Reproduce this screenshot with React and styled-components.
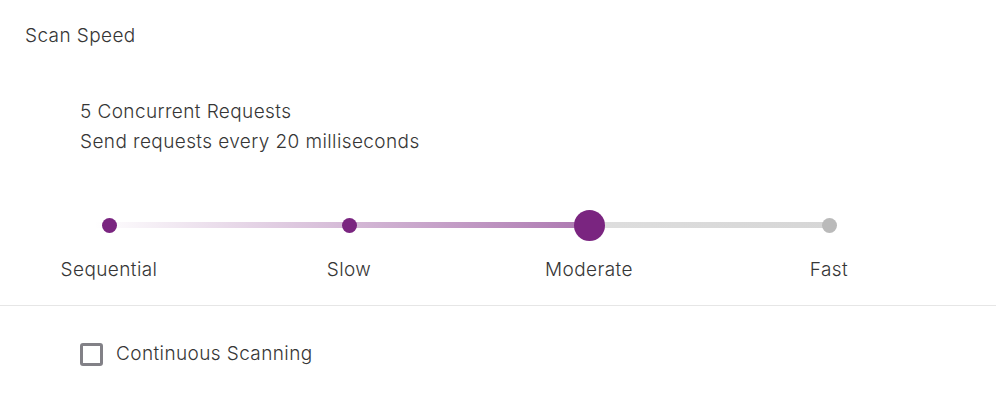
import React, { useState } from 'react';
import styled, { createGlobalStyle } from 'styled-components';

const GlobalStyle = createGlobalStyle`
  body {
    margin: 0;
    background: #ffffff;
    font-family: Inter, "Noto Sans", sans-serif;
    font-weight: 300;
    letter-spacing: 0.4px;
    color: #363636;
  }
`;

const PURPLE = '#7a2580';

const Panel = styled.div`
  width: 996px;
`;

const SpeedSection = styled.section`
  padding: 21px 0 23px;
  border-bottom: 1px solid #e6e6e6;
`;

const Title = styled.h2`
  margin: 0 0 0 25px;
  font-size: 19px;
  font-weight: 300;
  line-height: 30px;
`;

const Description = styled.div`
  margin: 46px 0 0 80px;
  font-size: 19px;
  line-height: 30px;
`;

const Slider = styled.div`
  width: 840px;
  margin: 53px 0 0 49px;
`;

const Rail = styled.div`
  position: relative;
  height: 30px;
  display: flex;
  justify-content: space-between;
  align-items: center;
`;

const Track = styled.div`
  position: absolute;
  left: 45px;
  right: 60px;
  top: 12px;
  height: 6px;
  background: linear-gradient(
    to right,
    rgba(122, 37, 128, 0) 0px,
    rgba(122, 37, 128, 0.62) ${p => p.$fill}px,
    #dedede ${p => p.$fill}px,
    #d6d6d6 100%
  );
`;

const Stop = styled.button`
  position: relative;
  width: 120px;
  height: 30px;
  padding: 0;
  border: 0;
  background: transparent;
  display: flex;
  align-items: center;
  justify-content: center;
  cursor: pointer;
`;

const Dot = styled.span`
  display: block;
  width: ${p => (p.$active ? 31 : 15)}px;
  height: ${p => (p.$active ? 31 : 15)}px;
  border-radius: 50%;
  background: ${p => (p.$reached ? PURPLE : '#bababa')};
`;

const Labels = styled.div`
  display: flex;
  justify-content: space-between;
  margin-top: 18px;
`;

const Label = styled.span`
  width: 120px;
  text-align: center;
  font-size: 19px;
  line-height: 24px;
`;

const OptionRow = styled.label`
  display: flex;
  align-items: center;
  gap: 13px;
  margin: 36px 0 0 80px;
  font-size: 19px;
  line-height: 24px;
  cursor: pointer;
`;

const Box = styled.span`
  box-sizing: border-box;
  width: 23px;
  height: 23px;
  border: 3px solid #828187;
  border-radius: 3px;
  background: ${p => (p.$checked ? PURPLE : '#fff')};
`;

const stops = ['Sequential', 'Slow', 'Moderate', 'Fast'];

export default function App() {
  const [speed, setSpeed] = useState(2);
  const [continuous, setContinuous] = useState(false);

  return (
    <Panel>
      <GlobalStyle />
      <SpeedSection>
        <Title>Scan Speed</Title>
        <Description>
          5 Concurrent Requests
          <br />
          Send requests every 20 milliseconds
        </Description>
        <Slider>
          <Rail>
            <Track $fill={15 + speed * 240} />
            {stops.map((s, i) => (
              <Stop key={s} onClick={() => setSpeed(i)} aria-label={s}>
                <Dot $active={i === speed} $reached={i <= speed} />
              </Stop>
            ))}
          </Rail>
          <Labels>
            {stops.map(s => (
              <Label key={s}>{s}</Label>
            ))}
          </Labels>
        </Slider>
      </SpeedSection>
      <OptionRow onClick={() => setContinuous(c => !c)}>
        <Box $checked={continuous} />
        Continuous Scanning
      </OptionRow>
    </Panel>
  );
}
